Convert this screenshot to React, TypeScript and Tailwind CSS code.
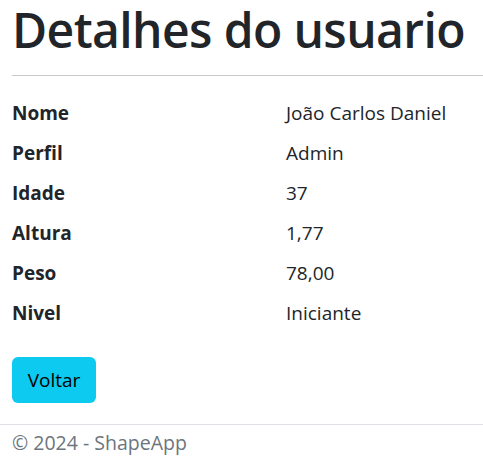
export default function App() {
  const rows: [string, string][] = [
    ["Nome", "João Carlos Daniel"],
    ["Perfil", "Admin"],
    ["Idade", "37"],
    ["Altura", "1,77"],
    ["Peso", "78,00"],
    ["Nivel", "Iniciante"],
  ];
  return (
    <div
      className="w-[483px] h-[462px] overflow-hidden bg-white text-[#212529]"
      style={{ fontFamily: '"Segoe UI", "Open Sans", "Noto Sans", sans-serif' }}
    >
      <div className="pl-[12px]">
        <h1 className="text-[48px] leading-[60px] font-semibold h-[75px] tracking-[-0.6px] whitespace-nowrap">
          Detalhes do usuario
        </h1>
        <div className="h-px bg-[#c8c9ca]" />
        <div className="pt-[22px] text-[19px] leading-[30px]">
          {rows.map(([k, v]) => (
            <div key={k} className="flex h-[40px]">
              <div className="w-[274px] font-bold">{k}</div>
              <div>{v}</div>
            </div>
          ))}
        </div>
        <div className="pt-[19px] h-[86px]">
          <button className="h-[46px] w-[84px] rounded-[6px] bg-[#0dcaf0] text-[19px] text-black">
            Voltar
          </button>
        </div>
      </div>
      <div className="border-t border-[#dee2e6] pl-[12px] pt-[3px] text-[19.5px] leading-[30px] text-[#6c757d]">
        © 2024 - ShapeApp
      </div>
    </div>
  );
}
